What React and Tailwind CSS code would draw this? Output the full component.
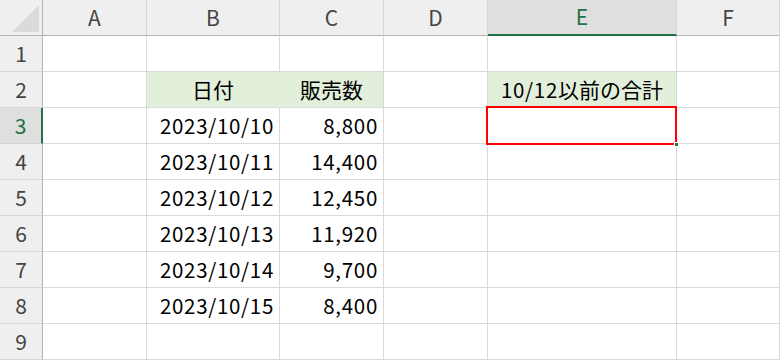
import React from 'react';

const cols = ['A', 'B', 'C', 'D', 'E', 'F'];

const rows = [
  { n: 1 },
  { n: 2, b: '日付', c: '販売数', e: ['10/12', '以前の合計'], head: true },
  { n: 3, b: '2023/10/10', c: '8,800' },
  { n: 4, b: '2023/10/11', c: '14,400' },
  { n: 5, b: '2023/10/12', c: '12,450' },
  { n: 6, b: '2023/10/13', c: '11,920' },
  { n: 7, b: '2023/10/14', c: '9,700' },
  { n: 8, b: '2023/10/15', c: '8,400' },
  { n: 9 },
];

const font = { fontFamily: '"Noto Sans CJK JP", "Noto Sans", sans-serif' };

const Cell = ({ children, className = '' }) => (
  <div className={`h-9 border-r border-b border-[#d9d9d9] flex items-center text-[20.5px] tracking-[0.7px] text-black ${className}`}>
    {children}
  </div>
);

const Jp = ({ children }) => <span className="text-[21px] tracking-normal">{children}</span>;

export default function App() {
  return (
    <div className="relative w-[780px] h-[360px] overflow-hidden bg-white" style={font}>
      <div className="grid grid-cols-[43px_104px_133px_104px_104px_189px_103px]">
        {/* corner */}
        <div className="h-9 bg-[#efefef] border-r border-b border-[#b4b4b4] relative">
          <svg className="absolute left-0 top-0" width="43" height="36">
            <polygon points="12,32 39,32 39,5" fill="#dadada" />
          </svg>
        </div>
        {cols.map((c) => (
          <div
            key={c}
            className={`h-9 flex items-center justify-center text-[21px] border-r border-[#d4d4d4] ${
              c === 'E'
                ? 'bg-[#dfdfdf] text-[#217346] border-b-2 border-b-[#217346]'
                : 'bg-[#efefef] text-[#444] border-b border-b-[#b4b4b4]'
            }`}
          >
            {c}
          </div>
        ))}

        {rows.map((r) => (
          <React.Fragment key={r.n}>
            <div
              className={`h-9 flex items-center justify-center text-[21px] border-b border-[#d4d4d4] ${
                r.n === 3
                  ? 'bg-[#dfdfdf] text-[#217346] border-r-2 border-r-[#217346]'
                  : 'bg-[#efefef] text-[#444] border-r border-r-[#b4b4b4]'
              }`}
            >
              {r.n}
            </div>
            <Cell />
            <Cell className={r.head ? 'bg-[#e2efda] border-r-[#e2efda] justify-center' : 'justify-end pr-[5px]'}>
              {r.head ? <Jp>{r.b}</Jp> : r.b}
            </Cell>
            <Cell className={r.head ? 'bg-[#e2efda] justify-center' : 'justify-end pr-[5px]'}>
              {r.head ? <Jp>{r.c}</Jp> : r.c}
            </Cell>
            <Cell />
            <Cell className={r.head ? 'bg-[#e2efda] justify-center' : ''}>
              {r.e && (
                <>
                  {r.e[0]}
                  <Jp>{r.e[1]}</Jp>
                </>
              )}
            </Cell>
            <Cell />
          </React.Fragment>
        ))}
      </div>

      {/* active cell E3 */}
      <div className="absolute left-[486px] top-[106px] w-[191px] h-[39px] border-2 border-[#ff0000]" />
      <div className="absolute left-[674px] top-[142px] w-[5px] h-[5px] bg-[#217346] border border-white" />
    </div>
  );
}
